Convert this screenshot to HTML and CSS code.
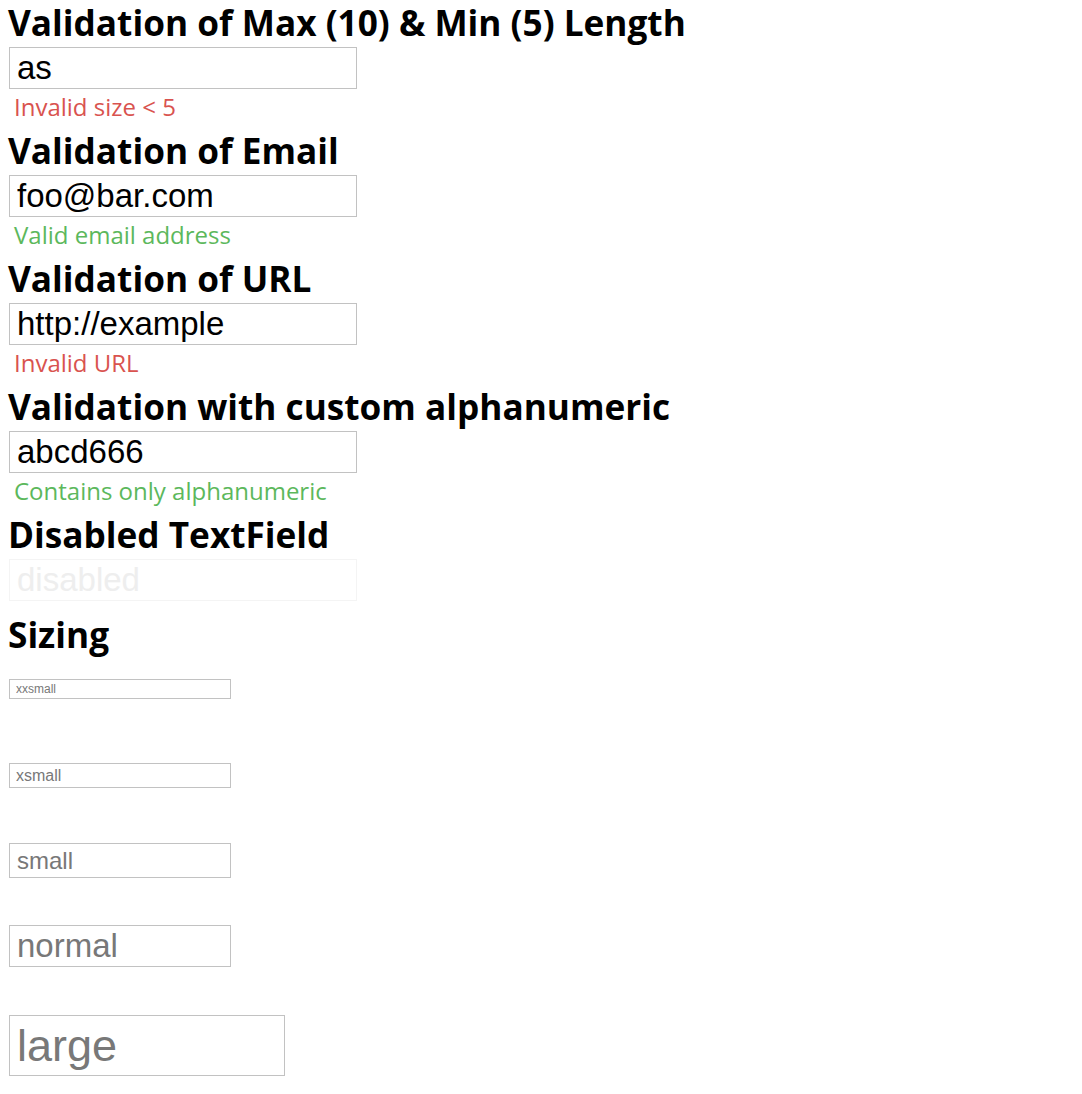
FILE: index.html
```html
<!DOCTYPE html>
<html>
<head>
<meta charset="utf-8">
<link rel="stylesheet" href="styles.css">
</head>
<body>
<section class="group">
  <h2 class="title">Validation of Max (10) &amp; Min (5) Length</h2>
  <input class="field" type="text" value="as">
  <div class="msg msg-error">Invalid size &lt; 5</div>
</section>
<section class="group">
  <h2 class="title">Validation of Email</h2>
  <input class="field" type="text" value="foo@bar.com">
  <div class="msg msg-ok">Valid email address</div>
</section>
<section class="group">
  <h2 class="title">Validation of URL</h2>
  <input class="field" type="text" value="http://example">
  <div class="msg msg-error">Invalid URL</div>
</section>
<section class="group">
  <h2 class="title">Validation with custom alphanumeric</h2>
  <input class="field" type="text" value="abcd666">
  <div class="msg msg-ok">Contains only alphanumeric</div>
</section>
<section class="group">
  <h2 class="title">Disabled TextField</h2>
  <input class="field field-disabled" type="text" placeholder="disabled" disabled>
</section>
<section class="group sizing">
  <h2 class="title">Sizing</h2>
  <div class="size-row"><input class="field size-xxsmall" type="text" placeholder="xxsmall"></div>
  <div class="size-row"><input class="field size-xsmall" type="text" placeholder="xsmall"></div>
  <div class="size-row"><input class="field size-small" type="text" placeholder="small"></div>
  <div class="size-row"><input class="field size-normal" type="text" placeholder="normal"></div>
  <div class="size-row"><input class="field size-large" type="text" placeholder="large"></div>
</section>
</body>
</html>
```

FILE: styles.css
```css
html, body {
  background: #ffffff;
}
body {
  margin: 8px;
  font-family: "Open Sans", sans-serif;
  color: #000;
}
.group {
  display: flex;
  flex-direction: column;
  align-items: flex-start;
}
.title {
  margin: 0 0 10px 0;
  font-family: "Open Sans", sans-serif;
  font-weight: 700;
  font-size: 35.2px;
  line-height: 29px;
  height: 29px;
  white-space: nowrap;
}
.field {
  box-sizing: border-box;
  width: 348px;
  height: 42px;
  margin: 0 0 0 1px;
  padding: 0 7px;
  border: 1px solid #c2c2c2;
  border-radius: 0;
  background: #fff;
  font-family: "Liberation Sans", Arial, sans-serif;
  font-size: 33px;
  color: #000;
  outline: none;
}
.field::placeholder {
  color: #787878;
}
.msg {
  margin-left: 6px;
  font-size: 24px;
  line-height: 36px;
  height: 47px;
}
.msg-error { color: #d9534f; }
.msg-ok { color: #5cb85c; }
.field-disabled {
  border-color: #f4f4f4;
  background: #fff;
  margin-bottom: 19px;
}
.field-disabled::placeholder {
  color: #eeeeee;
}
.size-row {
  display: flex;
}
.size-xxsmall {
  width: 222px;
  height: 20px;
  font-size: 12px;
  padding: 0 6px;
  margin-top: 20px;
  margin-bottom: 64px;
}
.size-xsmall {
  width: 222px;
  height: 25px;
  font-size: 16px;
  padding: 0 6px;
  margin-bottom: 55px;
}
.size-small {
  width: 222px;
  height: 35px;
  font-size: 24px;
  margin-bottom: 47px;
}
.size-normal {
  width: 222px;
  height: 42px;
  font-size: 33px;
  margin-bottom: 48px;
}
.size-large {
  width: 276px;
  height: 61px;
  font-size: 45px;
}
```
